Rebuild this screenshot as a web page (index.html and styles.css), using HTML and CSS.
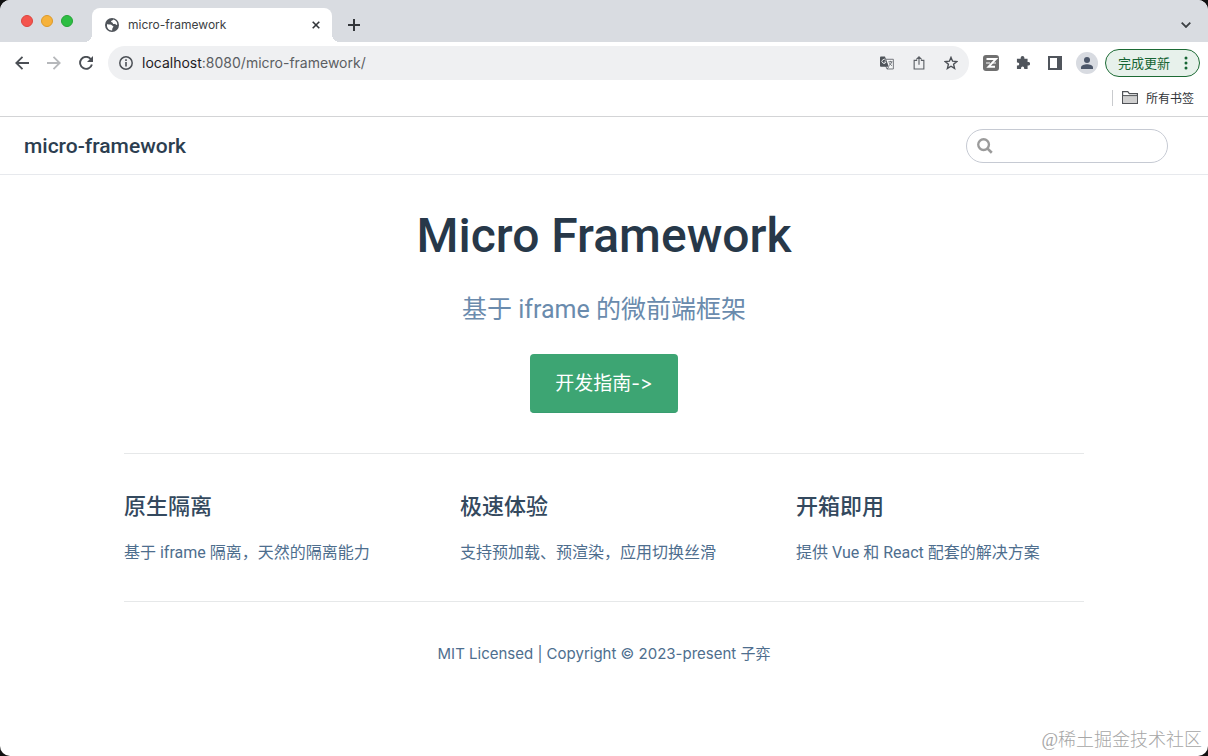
FILE: index.html
```html
<!DOCTYPE html>
<html lang="zh-CN">
<head>
<meta charset="utf-8">
<title>micro-framework</title>
<link rel="stylesheet" href="styles.css">
</head>
<body>
<div class="window">
  <div class="tabstrip">
    <div class="lights"><span class="light red"></span><span class="light yellow"></span><span class="light green"></span></div>
    <div class="tab">
      <svg class="favicon" viewBox="0 0 14 14" aria-hidden="true"><circle cx="7" cy="7" r="7" fill="#4f545a"/><path d="M2 6.300c1.200-.3 2 .3 3.400.3s1.500 1.500 2.800 1.500c.6 1.500-1 1.300-1 4.300-3.200.2-5.700-2.300-5.200-6.100zM8.200 1.600c-.3 1.300-2.100.9-2.200 2s1.500.5 1.800 1.600 1.400 1 2.100.6.600 1.400 2.300 1.200c.4-2.600-1.200-4.900-4-5.400z" fill="#fff"/></svg>
      <span class="tab-title">micro-framework</span>
      <button class="plain close" aria-label="关闭标签页"><svg width="8" height="8" viewBox="0 0 8 8"><path d="M.7.7l6.600 6.600M7.300.7L.7 7.300" stroke="#33363a" stroke-width="1.600"/></svg></button>
    </div>
    <button class="plain newtab" aria-label="新标签页"><svg width="12" height="12" viewBox="0 0 12 12"><path d="M6 0v12M0 6h12" stroke="#33363a" stroke-width="2"/></svg></button>
    <button class="plain tabs-menu" aria-label="搜索标签页"><svg width="10" height="6" viewBox="0 0 10 6"><path d="M.7.7L5 5 9.300.7" fill="none" stroke="#3c4043" stroke-width="1.800"/></svg></button>
  </div>
  <div class="toolbar">
    <div class="nav-buttons">
      <button class="plain tool" aria-label="后退"><svg width="14" height="14" viewBox="0 0 14 14"><path d="M14 7H1.500M7.500.8L1.300 7l6.200 6.200" fill="none" stroke="#4b4f55" stroke-width="1.800"/></svg></button>
      <button class="plain tool" aria-label="前进"><svg width="14" height="14" viewBox="0 0 14 14"><path d="M0 7h12.500M6.500.8L12.700 7l-6.200 6.200" fill="none" stroke="#b6b8bb" stroke-width="1.800"/></svg></button>
      <button class="plain tool" aria-label="重新加载"><svg width="14" height="14" viewBox="0 0 14 14"><path d="M11.700 3A6 6 0 1 0 12.900 8.400" fill="none" stroke="#4b4f55" stroke-width="1.900"/><path d="M14 0v6H8z" fill="#4b4f55"/></svg></button>
    </div>
    <div class="omnibox">
      <svg class="info" viewBox="0 0 14 14" aria-hidden="true"><circle cx="7" cy="7" r="6.200" fill="none" stroke="#4b4f55" stroke-width="1.500"/><path d="M7 6v4.500M7 3.300v1.600" stroke="#4b4f55" stroke-width="1.600"/></svg>
      <div class="url"><span class="host">localhost</span>:8080/micro-framework/</div>
      <button class="plain tool" aria-label="翻译此页"><svg width="14" height="14" viewBox="0 0 15 14"><path d="M6 3h8.300v10.400H7.500L6 10z" fill="#f6f7f8" stroke="#6a6e73"/><path d="M0 1a1 1 0 0 1 1-1h4.300l4.200 11H1a1 1 0 0 1-1-1z" fill="#4f545a"/><path d="M6.200 4.100A2.200 2.200 0 1 0 6.400 6H4.500" fill="none" stroke="#eef0f2"/><path d="M9 5.700h4.300M11.200 4.700v1M12.500 5.700c-.3 1.700-1.500 3-2.800 4M10 6.700c.5 1.300 1.500 2.500 2.800 3.200M7.500 13.500l2-2.500" fill="none" stroke="#5b5f65" stroke-width=".9"/></svg></button>
      <button class="plain tool" aria-label="分享"><svg width="12" height="14" viewBox="0 0 12 15"><path d="M4 4.700H.8v9.200h10.400V4.700H8M6 9.500V1.200M3.200 3.700L6 .9l2.800 2.800" fill="none" stroke="#5b5f65" stroke-width="1.200"/></svg></button>
      <button class="plain tool" aria-label="收藏"><svg width="14" height="14" viewBox="0 0 14 14"><path d="M7 1.400l1.600 3.800 4.200.4-3.200 2.700 1 4.100L7 10.200l-3.600 2.200 1-4.100L1.200 5.600l4.200-.4z" fill="none" stroke="#4b4f55" stroke-width="1.400"/></svg></button>
    </div>
    <div class="extensions">
      <button class="plain tool" aria-label="扩展程序 Z"><svg width="16" height="16" viewBox="0 0 16 16"><rect width="16" height="16" rx="3" fill="#707070"/><path d="M3.500 4h9.500l-7.500 7.800h6.500" fill="none" stroke="#fff" stroke-width="1.900"/><path d="M3 8h4M9.500 8H13" stroke="#fff" stroke-width="1.200"/></svg></button>
      <button class="plain tool" aria-label="扩展程序"><svg width="14" height="14" viewBox="0 0 15 15"><path d="M1 3h4V2a2 2 0 0 1 4 0v1h3.400v3.500h.9a1.800 1.800 0 0 1 0 3.600h-.9V14H8.800v-1a1.700 1.700 0 0 0-3.400 0v1H1v-3.700h.8a1.700 1.700 0 0 0 0-3.400H1z" fill="#50555c"/></svg></button>
      <button class="plain tool" aria-label="侧边栏"><svg width="14" height="14" viewBox="0 0 14 14"><path d="M0 0h14v14H0z" fill="#50555c"/><path d="M2 2h7v10H2z" fill="#fff"/></svg></button>
      <button class="plain tool" aria-label="个人资料"><svg width="22" height="22" viewBox="0 0 22 22"><circle cx="11" cy="11" r="11" fill="#d8dbe1"/><circle cx="11" cy="8" r="3" fill="#4b5669"/><path d="M5 17v-1.500C5 13.200 8.500 12.300 11 12.300s6 .9 6 3.200V17z" fill="#4b5669"/></svg></button>
    </div>
    <button class="update"><span class="update-text">完成更新</span><svg width="4" height="14" viewBox="0 0 4 14" aria-hidden="true"><path d="M2 2h0M2 7h0M2 12h0" stroke="#166534" stroke-width="3" stroke-linecap="round"/></svg></button>
  </div>
  <div class="bookmarks">
    <button class="plain all-bookmarks"><svg width="16" height="13" viewBox="0 0 16 13" aria-hidden="true"><path d="M.6 12.400V.6h5.200l1.500 2h8.100v9.800z" fill="#fff" stroke="#505357" stroke-width="1.200"/><path d="M1.200 5h13.600v6.800H1.200z" fill="#cfcfcf"/><path d="M1 4.600h14" stroke="#505357"/></svg>所有书签</button>
  </div>

  <header class="navbar">
    <a class="site-name" href="#">micro-framework</a>
    <label class="search"><svg width="16" height="16" viewBox="0 0 17 17" aria-hidden="true"><circle cx="7" cy="7" r="5.700" fill="none" stroke="#9b9b9b" stroke-width="2.500"/><path d="M11 11l4.700 4.700" stroke="#9b9b9b" stroke-width="2.800"/></svg><input type="text" aria-label="搜索"></label>
  </header>

  <main class="home">
    <section class="hero">
      <h1>Micro Framework</h1>
      <p class="description">基于 iframe 的微前端框架</p>
      <a class="action" href="#">开发指南-&gt;</a>
    </section>
    <section class="features">
      <div class="feature"><h2>原生隔离</h2><p>基于 iframe 隔离，天然的隔离能力</p></div>
      <div class="feature"><h2>极速体验</h2><p>支持预加载、预渲染，应用切换丝滑</p></div>
      <div class="feature"><h2>开箱即用</h2><p>提供 Vue 和 React 配套的解决方案</p></div>
    </section>
    <footer class="footer">MIT Licensed | Copyright © 2023-present 子弈</footer>
  </main>
  <div class="watermark">@稀土掘金技术社区</div>
</div>
</body>
</html>
```
FILE: styles.css
```css
* { box-sizing: border-box; }

body {
  margin: 0;
  background: #111;
  color: #2c3e50;
  font-family: Inter, "Noto Sans CJK SC", sans-serif;
  font-size: 16px;
  font-feature-settings: "calt" 0;
}

h1, h2, p { margin: 0; }
svg { display: block; flex: none; }
a { text-decoration: none; }

.plain {
  display: flex;
  align-items: center;
  justify-content: center;
  padding: 0;
  border: 0;
  background: none;
}

.window {
  position: relative;
  min-height: 100vh;
  overflow: hidden;
  border-radius: 10px;
  background: #fff;
}

/* Browser chrome */
.tabstrip {
  display: flex;
  align-items: flex-end;
  height: 42px;
  padding-right: 17px;
  background: #d9dce1;
}

.lights {
  display: flex;
  gap: 8px;
  align-self: center;
  width: 92px;
  padding-left: 21px;
}

.light {
  width: 12px;
  height: 12px;
  border: 1px solid;
  border-radius: 50%;
}

.red { background: #f4544d; border-color: #dc453f; }
.yellow { background: #f6b23b; border-color: #dd9a29; }
.green { background: #2dbe43; border-color: #25a436; }

.tab {
  position: relative;
  display: flex;
  align-items: center;
  width: 240px;
  height: 34px;
  padding: 0 12px 0 13px;
  border-radius: 8px 8px 0 0;
  background: #fff;
}

.tab::before,
.tab::after {
  content: "";
  position: absolute;
  bottom: 0;
  width: 8px;
  height: 8px;
}

.tab::before { right: 100%; background: radial-gradient(circle at 0 0, #d9dce1 8px, #fff 8px); }
.tab::after { left: 100%; background: radial-gradient(circle at 100% 0, #d9dce1 8px, #fff 8px); }

.favicon { width: 14px; height: 14px; }

.tab-title {
  flex: 1;
  margin-left: 9px;
  color: #3c4043;
  font-size: 12px;
  line-height: 16px;
}

.close { width: 8px; height: 34px; }
.newtab { width: 44px; height: 34px; }
.tabs-menu { height: 34px; margin-left: auto; }

.toolbar {
  display: flex;
  align-items: center;
  height: 42px;
  padding: 0 8px 0 6px;
}

.nav-buttons, .extensions { display: flex; }
.extensions { margin: 0 2px 0 6px; }
.tool { width: 32px; height: 32px; }

.omnibox {
  display: flex;
  flex: 1;
  align-items: center;
  height: 34px;
  margin-left: 6px;
  padding: 0 2px 0 11px;
  border-radius: 17px;
  background: #eff0f2;
}

.info { width: 14px; height: 14px; }

.url {
  flex: 1;
  margin-left: 9px;
  color: #5b5e62;
  font-size: 14px;
  line-height: 18px;
}

.host { color: #1f2124; }

.update {
  display: flex;
  align-items: center;
  justify-content: space-between;
  width: 95px;
  height: 28px;
  padding: 0 11px 0 12px;
  border: 1px solid #1d6b35;
  border-radius: 14px;
  background: #e7f1eb;
  color: #166534;
  font-family: "Noto Sans CJK SC", sans-serif;
  font-size: 13px;
}

.update-text { padding-bottom: 2px; }

.bookmarks {
  display: flex;
  align-items: center;
  justify-content: flex-end;
  height: 33px;
  padding: 0 14px 5px;
  border-bottom: 1px solid #d3d4d6;
}

.all-bookmarks {
  gap: 8px;
  height: 16px;
  padding-left: 9px;
  border-left: 1px solid #c9cbce;
  color: #303337;
  font-family: "Noto Sans CJK SC", sans-serif;
  font-size: 12px;
}

/* Page */
.navbar {
  display: flex;
  align-items: center;
  justify-content: space-between;
  height: 58px;
  padding: 0 40px 0 24px;
  border-bottom: 1px solid #e7e9ed;
}

.site-name {
  color: #2c3e50;
  font-family: Roboto, sans-serif;
  font-size: 21px;
  font-weight: 500;
}

.search {
  display: flex;
  align-items: center;
  gap: 8px;
  width: 202px;
  height: 34px;
  padding: 0 10px;
  border: 1px solid #c6cad3;
  border-radius: 17px;
}

.search input {
  flex: 1;
  min-width: 0;
  border: 0;
  outline: 0;
  background: none;
  font: inherit;
}

.home {
  max-width: 960px;
  margin: 0 auto;
}

.hero {
  display: flex;
  flex-direction: column;
  align-items: center;
  padding: 32px 0 40px;
}

.hero h1 {
  color: #273849;
  font-family: Roboto, sans-serif;
  font-size: 48px;
  font-weight: 500;
  line-height: 58px;
}

.description {
  margin: 28px 0 27px;
  color: #6a8bad;
  font-family: Roboto, "Noto Sans CJK SC", sans-serif;
  font-size: 25px;
  line-height: 34px;
}

.action {
  padding: 16px 25px 14px;
  border-bottom: 1px solid #389d70;
  border-radius: 4px;
  background: #3da573;
  color: #fff;
  font-size: 19px;
  line-height: 28px;
}

.features {
  display: grid;
  grid-template-columns: repeat(3, 288px);
  justify-content: space-between;
  padding: 38px 0 34px;
  border: solid #e6e8e9;
  border-width: 1px 0;
}

.feature h2 {
  color: #34495e;
  font-size: 22px;
  font-weight: 500;
  line-height: 28px;
}

.feature p {
  margin-top: 19px;
  color: #4e6e8e;
  font-family: Roboto, "Noto Sans CJK SC", sans-serif;
  line-height: 28px;
  white-space: nowrap;
}

.footer {
  padding: 38px 0;
  color: #4e6e8e;
  font-size: 15px;
  line-height: 28px;
  text-align: center;
}

.watermark {
  position: absolute;
  right: 6px;
  bottom: 3px;
  color: #a6a6a6;
  font-family: "Liberation Serif", "Noto Sans CJK SC", serif;
  font-size: 18px;
  font-weight: 300;
  line-height: 26px;
}
```
